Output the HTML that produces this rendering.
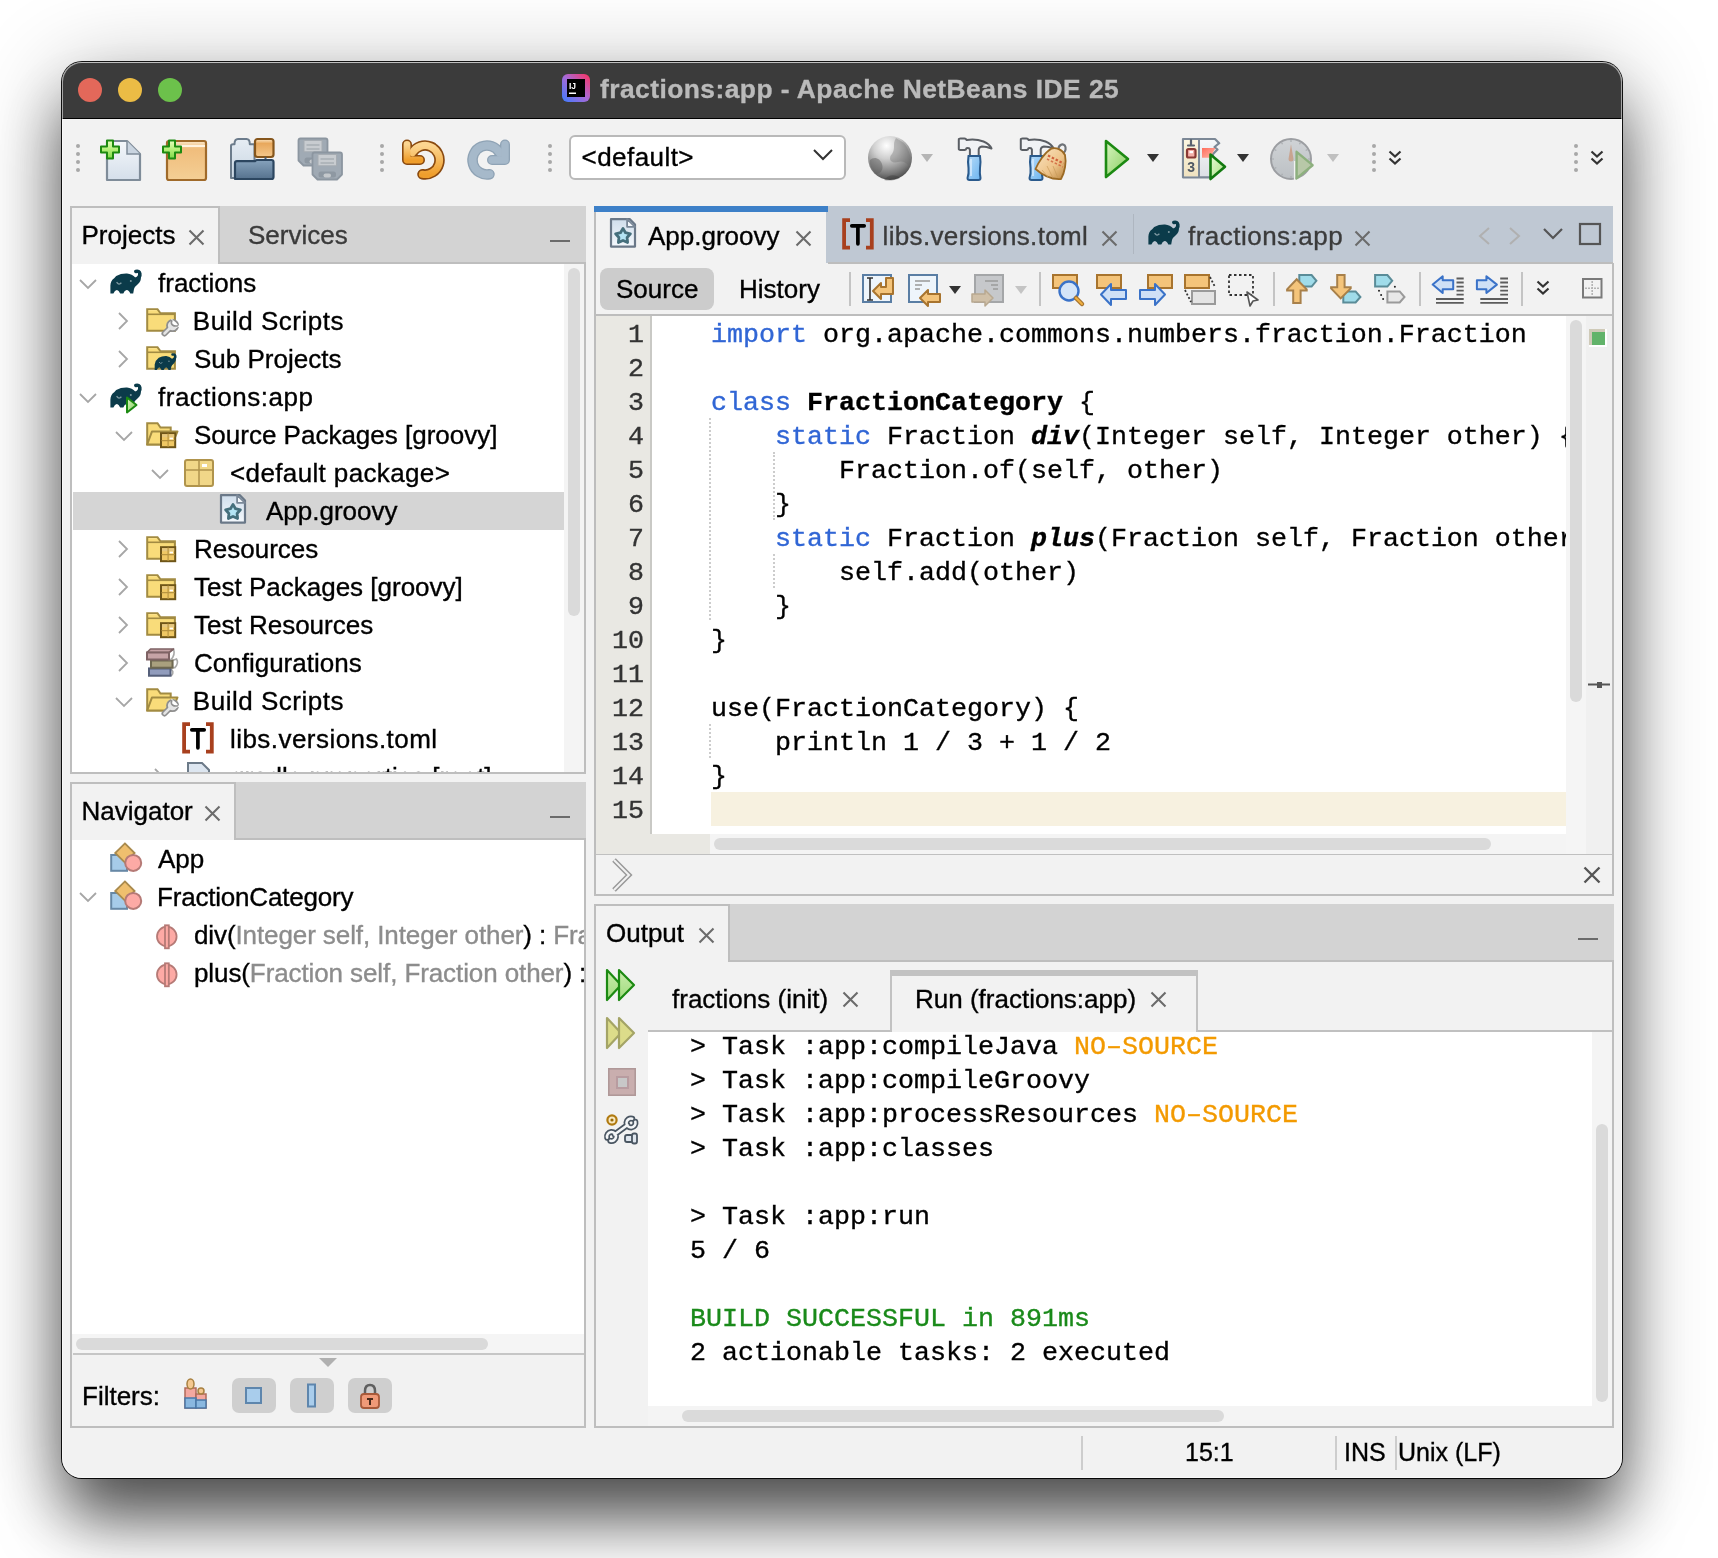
<!DOCTYPE html>
<html><head><meta charset="utf-8"><title>NetBeans</title>
<style>
html,body{margin:0;padding:0}
body{width:1718px;height:1558px;position:relative;overflow:hidden;background:#fff;font-family:'Liberation Sans', sans-serif}
.a{position:absolute}
svg{overflow:visible}
.t{white-space:nowrap;-webkit-text-stroke:0.35px currentColor}
</style></head><body>
<div class="a" style="left:0;top:0;width:1718px;height:1558px;will-change:transform">
<div class="a" style="left:62px;top:62px;width:1560px;height:1416px;border-radius:20px;background:#f2f2f2;box-shadow:0 0 0 1px rgba(0,0,0,0.92),0 44px 64px -4px rgba(0,0,0,0.62),0 12px 90px 0 rgba(0,0,0,0.30);overflow:hidden"><div class="a" style="left:0;top:0;width:100%;height:56px;background:#3b3b3b;border-bottom:1px solid #000"></div><div class="a" style="left:0;top:0;width:100%;height:1px;background:#707070;border-radius:20px 20px 0 0"></div></div>
<div class="a" style="left:78px;top:78px;width:24px;height:24px;border-radius:50%;background:#e3685a"></div>
<div class="a" style="left:118px;top:78px;width:24px;height:24px;border-radius:50%;background:#ebbc45"></div>
<div class="a" style="left:158px;top:78px;width:24px;height:24px;border-radius:50%;background:#6cc14b"></div>
<svg class="a" style="left:562px;top:74px" width="28" height="28" viewBox="0 0 28 28"><defs><linearGradient id="ijg" x1="1" y1="0" x2="0" y2="1"><stop offset="0" stop-color="#fe315d"/><stop offset="0.5" stop-color="#a56ad8"/><stop offset="1" stop-color="#3c7cff"/></linearGradient></defs><rect x="0" y="0" width="28" height="28" rx="6" fill="url(#ijg)"/><rect x="5" y="5" width="18" height="18" fill="#000"/><text x="7" y="14.5" font-family="Liberation Sans" font-weight="bold" font-size="8.5" fill="#fff">IJ</text><rect x="7" y="18.5" width="7" height="1.5" fill="#fff"/></svg>
<div class="a t" style="left:600px;top:72.45px;line-height:34px;font-size:26.4px;color:#bababa;font-weight:bold;font-family:'Liberation Sans', sans-serif;letter-spacing:0.45px;">fractions:app - Apache NetBeans IDE 25</div>
<div class="a" style="left:76px;top:144px;width:4px;height:4px;border-radius:50%;background:#a8a8a8"></div>
<div class="a" style="left:76px;top:152px;width:4px;height:4px;border-radius:50%;background:#a8a8a8"></div>
<div class="a" style="left:76px;top:160px;width:4px;height:4px;border-radius:50%;background:#a8a8a8"></div>
<div class="a" style="left:76px;top:168px;width:4px;height:4px;border-radius:50%;background:#a8a8a8"></div>
<div class="a" style="left:380px;top:144px;width:4px;height:4px;border-radius:50%;background:#a8a8a8"></div>
<div class="a" style="left:380px;top:152px;width:4px;height:4px;border-radius:50%;background:#a8a8a8"></div>
<div class="a" style="left:380px;top:160px;width:4px;height:4px;border-radius:50%;background:#a8a8a8"></div>
<div class="a" style="left:380px;top:168px;width:4px;height:4px;border-radius:50%;background:#a8a8a8"></div>
<div class="a" style="left:548px;top:144px;width:4px;height:4px;border-radius:50%;background:#a8a8a8"></div>
<div class="a" style="left:548px;top:152px;width:4px;height:4px;border-radius:50%;background:#a8a8a8"></div>
<div class="a" style="left:548px;top:160px;width:4px;height:4px;border-radius:50%;background:#a8a8a8"></div>
<div class="a" style="left:548px;top:168px;width:4px;height:4px;border-radius:50%;background:#a8a8a8"></div>
<div class="a" style="left:1372px;top:144px;width:4px;height:4px;border-radius:50%;background:#a8a8a8"></div>
<div class="a" style="left:1372px;top:152px;width:4px;height:4px;border-radius:50%;background:#a8a8a8"></div>
<div class="a" style="left:1372px;top:160px;width:4px;height:4px;border-radius:50%;background:#a8a8a8"></div>
<div class="a" style="left:1372px;top:168px;width:4px;height:4px;border-radius:50%;background:#a8a8a8"></div>
<div class="a" style="left:1574px;top:144px;width:4px;height:4px;border-radius:50%;background:#a8a8a8"></div>
<div class="a" style="left:1574px;top:152px;width:4px;height:4px;border-radius:50%;background:#a8a8a8"></div>
<div class="a" style="left:1574px;top:160px;width:4px;height:4px;border-radius:50%;background:#a8a8a8"></div>
<div class="a" style="left:1574px;top:168px;width:4px;height:4px;border-radius:50%;background:#a8a8a8"></div>
<svg class="a" style="left:100px;top:138px" width="44" height="44" viewBox="0 0 44 44"><defs><linearGradient id="nfg" x1="0" y1="0" x2="0" y2="1"><stop offset="0" stop-color="#f4f7fb"/><stop offset="1" stop-color="#d5dfea"/></linearGradient></defs><defs><linearGradient id="plg" x1="0" y1="0" x2="0" y2="1"><stop offset="0" stop-color="#e6ffc0"/><stop offset="0.5" stop-color="#b4f078"/><stop offset="1" stop-color="#7ed848"/></linearGradient></defs><path d="M7 3 H27 L40 16 V42 H7 Z" fill="url(#nfg)" stroke="#7f8c99" stroke-width="2.2" stroke-linejoin="round"/><path d="M27 3 V16 H40" fill="#c9d4e0" stroke="#7f8c99" stroke-width="1.5"/><path d="M7 2.5 H13 V8.5 H19 V14.5 H13 V20.5 H7 V14.5 H1 V8.5 H7 Z" fill="url(#plg)" stroke="#1d8a10" stroke-width="2" stroke-linejoin="round"/></svg>
<svg class="a" style="left:162px;top:138px" width="46" height="44" viewBox="0 0 46 44"><defs><linearGradient id="npg" x1="0" y1="0" x2="0" y2="1"><stop offset="0" stop-color="#fbe7c9"/><stop offset="0.2" stop-color="#f0bd7c"/><stop offset="1" stop-color="#f4cf95"/></linearGradient></defs><defs><linearGradient id="plg" x1="0" y1="0" x2="0" y2="1"><stop offset="0" stop-color="#e6ffc0"/><stop offset="0.5" stop-color="#b4f078"/><stop offset="1" stop-color="#7ed848"/></linearGradient></defs><rect x="5" y="3" width="39" height="39" rx="2" fill="url(#npg)" stroke="#a06a2a" stroke-width="2.2"/><path d="M6 8 H43" stroke="#fff3e0" stroke-width="2"/><path d="M7 2.5 H13 V8.5 H19 V14.5 H13 V20.5 H7 V14.5 H1 V8.5 H7 Z" fill="url(#plg)" stroke="#1d8a10" stroke-width="2" stroke-linejoin="round"/></svg>
<svg class="a" style="left:228px;top:136px" width="48" height="46" viewBox="0 0 48 46"><defs><linearGradient id="opg" x1="0" y1="0" x2="0" y2="1"><stop offset="0" stop-color="#e6edf4"/><stop offset="1" stop-color="#c9d6e2"/></linearGradient></defs><defs><linearGradient id="opf" x1="0" y1="0" x2="0" y2="1"><stop offset="0" stop-color="#86a2bc"/><stop offset="1" stop-color="#56728e"/></linearGradient></defs><defs><linearGradient id="opb" x1="0" y1="0" x2="0" y2="1"><stop offset="0" stop-color="#fbe6c4"/><stop offset="0.25" stop-color="#e8a85c"/><stop offset="1" stop-color="#f4c88c"/></linearGradient></defs><path d="M3 42 V10 Q3 8.2, 5 8.2 H6.5 Q6.5 3, 10 3 H18.5 Q21.8 3, 21.8 8.2 H26.5 V42 Z" fill="url(#opg)" stroke="#6c7c8c" stroke-width="2" stroke-linejoin="round"/><rect x="27" y="3" width="18.5" height="18" rx="2.5" fill="url(#opb)" stroke="#86561c" stroke-width="2.2"/><path d="M37.5 21 V25" stroke="#4a5a6a" stroke-width="2"/><path d="M7 43 V27 Q7 25.2, 9 25.2 H27 L28.5 24 H43.5 Q45.5 24, 45.5 26 V41 Q45.5 43, 43.5 43 Z" fill="url(#opf)" stroke="#2c4660" stroke-width="2.2" stroke-linejoin="round"/></svg>
<svg class="a" style="left:296px;top:136px" width="48" height="46" viewBox="0 0 48 46"><path d="M4.5 2.5 H29.5 Q31.5 2.5, 31.5 4.5 V24.5 L26.5 29.5 H7.5 L2.5 24.5 V4.5 Q2.5 2.5, 4.5 2.5 Z" fill="#a0aab4" stroke="#8c96a0" stroke-width="1.8" stroke-linejoin="round"/><rect x="8.0" y="4.5" width="18" height="11.3" fill="#c8ccd0" stroke="#a6acb2" stroke-width="1"/><path d="M10.5 9.0 H23.5 M10.5 13.0 H23.5" stroke="#a8aeb4" stroke-width="1.4"/><rect x="8.5" y="21.5" width="17" height="6" rx="2.5" fill="#8e98a2"/><rect x="13.5" y="23.5" width="7" height="4" rx="2" fill="#c4c8cc"/><path d="M18.5 16.5 H44.0 Q46.0 16.5, 46.0 18.5 V38.5 L41.0 43.5 H21.5 L16.5 38.5 V18.5 Q16.5 16.5, 18.5 16.5 Z" fill="#a0aab4" stroke="#8c96a0" stroke-width="1.8" stroke-linejoin="round"/><rect x="22.0" y="18.5" width="18.5" height="11.3" fill="#c8ccd0" stroke="#a6acb2" stroke-width="1"/><path d="M24.5 23.0 H38.0 M24.5 27.0 H38.0" stroke="#a8aeb4" stroke-width="1.4"/><rect x="22.5" y="35.5" width="17.5" height="6" rx="2.5" fill="#8e98a2"/><rect x="27.5" y="37.5" width="7.5" height="4" rx="2" fill="#c4c8cc"/></svg>
<svg class="a" style="left:399px;top:138px" width="48" height="44" viewBox="0 0 48 44"><defs><linearGradient id="ung" x1="0" y1="0" x2="0" y2="1"><stop offset="0" stop-color="#fcd590"/><stop offset="1" stop-color="#ef9e2c"/></linearGradient></defs><path d="M13.44 14.75 A14.5 14.5 0 1 1 23.48 36.28" fill="none" stroke="#8a4a10" stroke-width="10.5" stroke-linecap="round"/><path d="M8 6.5 V22 H21" fill="none" stroke="#8a4a10" stroke-width="10" stroke-linecap="round" stroke-linejoin="round"/><path d="M13.44 14.75 A14.5 14.5 0 1 1 23.48 36.28" fill="none" stroke="url(#ung)" stroke-width="7.2" stroke-linecap="round"/><path d="M8 6.5 V22 H21" fill="none" stroke="url(#ung)" stroke-width="6.8" stroke-linecap="round" stroke-linejoin="round"/></svg>
<svg class="a" style="left:465px;top:138px" width="48" height="44" viewBox="0 0 48 44"><g transform="translate(48,0) scale(-1,1)"><path d="M13.44 14.75 A14.5 14.5 0 1 1 23.48 36.28" fill="none" stroke="#8fa3b5" stroke-width="10.5" stroke-linecap="round"/><path d="M8 6.5 V22 H21" fill="none" stroke="#8fa3b5" stroke-width="10" stroke-linecap="round" stroke-linejoin="round"/><path d="M13.44 14.75 A14.5 14.5 0 1 1 23.48 36.28" fill="none" stroke="#a6b9ca" stroke-width="7.8" stroke-linecap="round"/><path d="M8 6.5 V22 H21" fill="none" stroke="#a6b9ca" stroke-width="7.4" stroke-linecap="round" stroke-linejoin="round"/></g></svg>
<div class="a" style="left:569px;top:135px;width:273px;height:41px;border:2px solid #b9b9b9;border-radius:6px;background:#fff"></div>
<div class="a t" style="left:581.5px;top:139.99px;line-height:34px;font-size:26px;color:#000;font-weight:normal;font-family:'Liberation Sans', sans-serif;letter-spacing:0.45px;">&lt;default&gt;</div>
<svg class="a" style="left:812px;top:148px" width="22" height="14" viewBox="0 0 22 14"><path d="M2 2 L11 11 L20 2" fill="none" stroke="#333" stroke-width="2"/></svg>
<svg class="a" style="left:866px;top:134px" width="48" height="48" viewBox="0 0 48 48"><defs><radialGradient id="glg" cx="0.42" cy="0.22" r="0.85"><stop offset="0" stop-color="#ffffff"/><stop offset="0.35" stop-color="#cfcfcf"/><stop offset="0.75" stop-color="#7a7a7a"/><stop offset="1" stop-color="#3a3a3a"/></radialGradient></defs><circle cx="24" cy="24" r="22" fill="url(#glg)"/><path d="M4 26 C8 22, 14 24, 16 30 C18 36, 14 40, 10 40 C6 36, 3 31, 4 26 Z" fill="#5a5a5a" opacity="0.45"/><path d="M30 4 C26 10, 30 14, 26 20 C22 24, 24 30, 32 28 C38 26, 42 30, 44 34 C46 26, 44 16, 38 9 Z" fill="#6a6a6a" opacity="0.35"/><path d="M18 46 C22 40, 30 40, 34 44 C28 47, 22 47, 18 46 Z" fill="#333" opacity="0.35"/></svg>
<svg class="a" style="left:921px;top:154px" width="12" height="8" viewBox="0 0 12 8"><path d="M0 0 L12 0 L6 8 Z" fill="#b5b5b5"/></svg>
<svg class="a" style="left:954px;top:136px" width="42" height="46" viewBox="0 0 42 46"><defs><linearGradient id="hmb" x1="0" y1="0" x2="1" y2="1"><stop offset="0" stop-color="#b8dcf8"/><stop offset="1" stop-color="#6cb4f0"/></linearGradient></defs><g transform="translate(1.5,0)"><path d="M3.3 3.5 Q3 2.5, 5 2.5 H9 Q10.5 2.5, 11 4 Q20 2.5, 28 5.5 Q34 8, 36 12.5 Q31 10.5, 26.5 10.5 Q23.5 11, 23.2 13.5 V20 H14.4 V13.5 Q14 11.6, 11 12.2 Q10.5 14, 9 14 H5 Q3 14, 3.3 12.5 Z" fill="#f0f2f5" stroke="#5a5e64" stroke-width="2" stroke-linejoin="round"/><path d="M13 20 H24.5 Q25.5 26, 24.5 32 Q24 38, 25 42 Q25 44, 23 44 H14 Q12 44, 12 42 Q13.5 38, 13 32 Q12 26, 13 20 Z" fill="url(#hmb)" stroke="#2a5a8c" stroke-width="2"/><path d="M15.5 23 V40" stroke="#e4f2ff" stroke-width="1.6" opacity="0.8"/></g></svg>
<svg class="a" style="left:1018px;top:136px" width="50" height="46" viewBox="0 0 50 46"><defs><linearGradient id="hmb" x1="0" y1="0" x2="1" y2="1"><stop offset="0" stop-color="#b8dcf8"/><stop offset="1" stop-color="#6cb4f0"/></linearGradient></defs><g transform="translate(-0.5,0)"><path d="M3.3 3.5 Q3 2.5, 5 2.5 H9 Q10.5 2.5, 11 4 Q20 2.5, 28 5.5 Q34 8, 36 12.5 Q31 10.5, 26.5 10.5 Q23.5 11, 23.2 13.5 V20 H14.4 V13.5 Q14 11.6, 11 12.2 Q10.5 14, 9 14 H5 Q3 14, 3.3 12.5 Z" fill="#f0f2f5" stroke="#5a5e64" stroke-width="2" stroke-linejoin="round"/><path d="M13 20 H24.5 Q25.5 26, 24.5 32 Q24 38, 25 42 Q25 44, 23 44 H14 Q12 44, 12 42 Q13.5 38, 13 32 Q12 26, 13 20 Z" fill="url(#hmb)" stroke="#2a5a8c" stroke-width="2"/><path d="M15.5 23 V40" stroke="#e4f2ff" stroke-width="1.6" opacity="0.8"/></g><defs><linearGradient id="brg" x1="0" y1="0" x2="1" y2="1"><stop offset="0" stop-color="#fbe6c4"/><stop offset="0.6" stop-color="#eec48a"/><stop offset="1" stop-color="#b8843e"/></linearGradient></defs><path d="M40.5 14 C40 9, 44.5 7, 46.8 9.5 C48.5 12, 47.5 15.5, 45.5 17" fill="none" stroke="#6e7278" stroke-width="2.2"/><path d="M17.5 33 C20 27, 26 17, 33.5 12.5 C38 11.5, 44 13, 47 19 C48.5 26, 47 36, 43 43 C36 43.5, 26 40.5, 17.5 33 Z" fill="url(#brg)" stroke="#9c6a24" stroke-width="1.8" stroke-linejoin="round"/><path d="M30 19.5 L45.5 27.5" stroke="#d0603a" stroke-width="2.2" stroke-dasharray="2.5 1.8"/><path d="M29 23 L45 31" stroke="#d0603a" stroke-width="1.6" stroke-dasharray="2.5 1.8" opacity="0.8"/><path d="M24 34 L30 41 M29 30 L35 42 M35 30 L40 42" stroke="#c89a5a" stroke-width="1" opacity="0.7"/></svg>
<svg class="a" style="left:1102px;top:138px" width="30" height="42" viewBox="0 0 30 42"><defs><linearGradient id="rng" x1="0" y1="0" x2="1" y2="1"><stop offset="0" stop-color="#d8f4c0"/><stop offset="1" stop-color="#86cf5e"/></linearGradient></defs><path d="M4 3 L26 21 L4 39 Z" fill="url(#rng)" stroke="#1c8a12" stroke-width="2.6" stroke-linejoin="round"/></svg>
<svg class="a" style="left:1147px;top:154px" width="12" height="8" viewBox="0 0 12 8"><path d="M0 0 L12 0 L6 8 Z" fill="#333"/></svg>
<svg class="a" style="left:1180px;top:136px" width="48" height="46" viewBox="0 0 48 46"><defs><linearGradient id="dbg" x1="0" y1="0" x2="0" y2="1"><stop offset="0" stop-color="#fbf6e0"/><stop offset="1" stop-color="#efe2c0"/></linearGradient></defs><defs><linearGradient id="dbp" x1="0" y1="0" x2="0" y2="1"><stop offset="0" stop-color="#f6f8fa"/><stop offset="1" stop-color="#dcdfe4"/></linearGradient></defs><defs><linearGradient id="dbr" x1="0" y1="0" x2="1" y2="1"><stop offset="0" stop-color="#ff6e5e"/><stop offset="1" stop-color="#ffb8a8"/></linearGradient></defs><defs><linearGradient id="rng2" x1="0" y1="0" x2="1" y2="1"><stop offset="0" stop-color="#e8fad8"/><stop offset="1" stop-color="#a6e07e"/></linearGradient></defs><path d="M3 3 H35 L39.2 7.2 L34.5 11 L37.5 13.5 L33 18 V36 L30 41.3 H3 Z" fill="url(#dbp)" stroke="#7c8896" stroke-width="2.2" stroke-linejoin="round"/><rect x="4" y="4" width="15" height="36.3" fill="url(#dbg)"/><path d="M19 3.5 V41" stroke="#7c8896" stroke-width="2"/><path d="M11 4 V9 M8 9.5 H14" stroke="#5a6470" stroke-width="2.2" stroke-linecap="round"/><rect x="7" y="13" width="8.5" height="8.5" rx="1.5" fill="#f4b0a8" stroke="#8a3a34" stroke-width="2.2"/><rect x="9.5" y="15" width="3.5" height="2.2" fill="#fff"/><text x="7.2" y="36" font-family="Liberation Sans" font-weight="bold" font-size="14" fill="#4e5864">3</text><path d="M22 12 H35.5 L30 21.7 H22 Z" fill="url(#dbr)"/><path d="M30.5 18.5 L45 30.7 L30.5 43 Z" fill="url(#rng2)" stroke="#137a10" stroke-width="2.6" stroke-linejoin="round"/></svg>
<svg class="a" style="left:1237px;top:154px" width="12" height="8" viewBox="0 0 12 8"><path d="M0 0 L12 0 L6 8 Z" fill="#333"/></svg>
<svg class="a" style="left:1268px;top:136px" width="48" height="46" viewBox="0 0 48 46"><defs><linearGradient id="prg" x1="0" y1="0" x2="0" y2="1"><stop offset="0" stop-color="#d0d3d6"/><stop offset="1" stop-color="#bcc0c4"/></linearGradient></defs><circle cx="23" cy="23" r="20" fill="url(#prg)" stroke="#9c9ea2" stroke-width="2"/><path d="M23.0 6.0 L23.0 4.0 M31.5 8.3 L32.5 6.5 M37.7 14.5 L39.5 13.5 M40.0 23.0 L42.0 23.0 M37.7 31.5 L39.5 32.5 M31.5 37.7 L32.5 39.5 M23.0 40.0 L23.0 42.0 M14.5 37.7 L13.5 39.5 M8.3 31.5 L6.5 32.5 M6.0 23.0 L4.0 23.0 M8.3 14.5 L6.5 13.5 M14.5 8.3 L13.5 6.5 " stroke="#a8acb0" stroke-width="1.2"/><path d="M23 8.3 L25.5 23 Q25.5 25.5, 23 25.5 Q20.5 25.5, 20.5 23 Z" fill="#c8a490"/><path d="M26.7 25 V44" stroke="#f2f2f2" stroke-width="1.6"/><path d="M28.6 15.8 L44.6 29.2 L28.6 42.4 Z" fill="#b8c8a8" stroke="#8db07e" stroke-width="2.4" stroke-linejoin="round"/></svg>
<svg class="a" style="left:1327px;top:154px" width="12" height="8" viewBox="0 0 12 8"><path d="M0 0 L12 0 L6 8 Z" fill="#c0c0c0"/></svg>
<svg class="a" style="left:1388px;top:150px" width="14" height="16" viewBox="0 0 14 16"><path d="M1.5 1.5 L7 6.5 L12.5 1.5 M1.5 8.5 L7 13.5 L12.5 8.5" fill="none" stroke="#333" stroke-width="2.2"/></svg>
<svg class="a" style="left:1590px;top:150px" width="14" height="16" viewBox="0 0 14 16"><path d="M1.5 1.5 L7 6.5 L12.5 1.5 M1.5 8.5 L7 13.5 L12.5 8.5" fill="none" stroke="#333" stroke-width="2.2"/></svg>
<div class="a" style="left:70px;top:206px;width:516px;height:568px;background:#fff;border:2px solid #bebebe;box-sizing:border-box"></div>
<div class="a" style="left:72px;top:208px;width:146px;height:56px;background:#f2f2f2"></div>
<div class="a" style="left:218px;top:206px;width:368px;height:58px;background:#d3d3d3;border-left:2px solid #bebebe;border-bottom:2px solid #bebebe;box-sizing:border-box"></div>
<div class="a t" style="left:81.5px;top:217.99px;line-height:34px;font-size:26px;color:#000;font-weight:normal;font-family:'Liberation Sans', sans-serif;">Projects</div>
<svg class="a" style="left:188px;top:229px" width="17" height="17" viewBox="0 0 17 17"><path d="M1.5 1.5 L15.5 15.5 M15.5 1.5 L1.5 15.5" stroke="#6b6b6b" stroke-width="2.1" fill="none"/></svg>
<div class="a t" style="left:248px;top:217.99px;line-height:34px;font-size:26px;color:#3a3a3a;font-weight:normal;font-family:'Liberation Sans', sans-serif;">Services</div>
<div class="a" style="left:550px;top:240px;width:20px;height:2px;background:#6b6b6b"></div>
<div class="a" style="left:564px;top:264px;width:20px;height:508px;background:#f4f4f4"></div>
<div class="a" style="left:568px;top:268px;width:12px;height:348px;background:#dadada;border-radius:6px"></div>
<div class="a" style="left:73px;top:492px;width:491px;height:38px;background:#d5d5d5"></div>
<div class="a" style="left:73px;top:264px;width:491px;height:508px;overflow:hidden">
<svg class="a" style="left:6px;top:15px" width="18" height="11" viewBox="0 0 18 11"><path d="M1 1 L9 9 L17 1" fill="none" stroke="#a6a6a6" stroke-width="1.8"/></svg>
<svg class="a" style="left:35px;top:3px" width="36" height="32" viewBox="0 0 36 32"><path d="M2.4 26.6 V18.5 Q2.6 13.5, 6.2 11.2 L8.2 9 Q13 6.4, 19 6.6 Q24 7, 27.5 10.8 L32.8 10 Q33.5 14, 29.5 17.5 Q26.8 19.5, 26 22 L25.2 26.6 H22.3 Q20.8 22.8, 18.6 23 Q16.5 23.2, 15.3 26.6 H12.2 Q10.6 22.8, 8.8 23 Q6.8 23.2, 5.4 26.6 Z" fill="#0b3b4a"/><path d="M27.5 12.5 Q32.5 10.5, 31.8 6.5 Q31.2 3.6, 27.8 4.4" fill="none" stroke="#0b3b4a" stroke-width="3.6" stroke-linecap="round"/><path d="M8.6 15.2 Q10.8 18.6, 13.4 15.8" fill="none" stroke="#7f9aa2" stroke-width="1.3"/><circle cx="22.8" cy="14" r="1" fill="#7f9aa2"/></svg>
<div class="a t" style="left:85px;top:1.99px;line-height:34px;font-size:26px;color:#000;font-weight:normal;font-family:'Liberation Sans', sans-serif;">fractions</div>
<svg class="a" style="left:45px;top:48px" width="11" height="18" viewBox="0 0 11 18"><path d="M1 1 L9 9 L1 17" fill="none" stroke="#a6a6a6" stroke-width="1.8"/></svg>
<svg class="a" style="left:71px;top:41px" width="36" height="32" viewBox="0 0 36 32"><path d="M3.2 4.2 H13.5 L16.5 8.3 H30.9 V25.8 H3.2 Z" fill="#f9dc7a" stroke="#a28b42" stroke-width="2" stroke-linejoin="miter"/><path d="M3.2 9.3 H30.9" stroke="#a28b42" stroke-width="1.6"/><path d="M4.5 5.6 H12.8" stroke="#fde48e" stroke-width="1"/><path d="M20.5 28.5 L26 23" stroke="#8f8f8f" stroke-width="6" stroke-linecap="round"/><circle cx="28.6" cy="20.6" r="5.6" fill="#e4e4e4" stroke="#8f8f8f" stroke-width="1.8"/><path d="M20.5 28.5 L26 23" stroke="#e4e4e4" stroke-width="2.6" stroke-linecap="round"/><path d="M27.5 13.5 L35.5 21.5 L32.5 22.8 L27.2 18 Z" fill="#fff"/><path d="M28 15.2 Q26.5 18.5, 28.5 20 Q30.5 21.5, 34 20.8" fill="none" stroke="#8f8f8f" stroke-width="1.6"/></svg>
<div class="a t" style="left:119.8px;top:39.99px;line-height:34px;font-size:26px;color:#000;font-weight:normal;font-family:'Liberation Sans', sans-serif;letter-spacing:0.52px;">Build Scripts</div>
<svg class="a" style="left:45px;top:86px" width="11" height="18" viewBox="0 0 11 18"><path d="M1 1 L9 9 L1 17" fill="none" stroke="#a6a6a6" stroke-width="1.8"/></svg>
<svg class="a" style="left:71px;top:79px" width="36" height="32" viewBox="0 0 36 32"><path d="M3.2 4.2 H13.5 L16.5 8.3 H30.9 V25.8 H3.2 Z" fill="#f9dc7a" stroke="#a28b42" stroke-width="2" stroke-linejoin="miter"/><path d="M3.2 9.3 H30.9" stroke="#a28b42" stroke-width="1.6"/><path d="M4.5 5.6 H12.8" stroke="#fde48e" stroke-width="1"/><g transform="translate(9,8.5) scale(0.7)"><path d="M2.4 26.6 V18.5 Q2.6 13.5, 6.2 11.2 L8.2 9 Q13 6.4, 19 6.6 Q24 7, 27.5 10.8 L32.8 10 Q33.5 14, 29.5 17.5 Q26.8 19.5, 26 22 L25.2 26.6 H22.3 Q20.8 22.8, 18.6 23 Q16.5 23.2, 15.3 26.6 H12.2 Q10.6 22.8, 8.8 23 Q6.8 23.2, 5.4 26.6 Z" fill="#0b3b4a"/><path d="M27.5 12.5 Q32.5 10.5, 31.8 6.5 Q31.2 3.6, 27.8 4.4" fill="none" stroke="#0b3b4a" stroke-width="3.6" stroke-linecap="round"/><path d="M8.6 15.2 Q10.8 18.6, 13.4 15.8" fill="none" stroke="#7f9aa2" stroke-width="1.3"/><circle cx="22.8" cy="14" r="1" fill="#7f9aa2"/></g></svg>
<div class="a t" style="left:121px;top:77.99px;line-height:34px;font-size:26px;color:#000;font-weight:normal;font-family:'Liberation Sans', sans-serif;">Sub Projects</div>
<svg class="a" style="left:6px;top:129px" width="18" height="11" viewBox="0 0 18 11"><path d="M1 1 L9 9 L17 1" fill="none" stroke="#a6a6a6" stroke-width="1.8"/></svg>
<svg class="a" style="left:35px;top:117px" width="36" height="32" viewBox="0 0 36 32"><path d="M2.4 26.6 V18.5 Q2.6 13.5, 6.2 11.2 L8.2 9 Q13 6.4, 19 6.6 Q24 7, 27.5 10.8 L32.8 10 Q33.5 14, 29.5 17.5 Q26.8 19.5, 26 22 L25.2 26.6 H22.3 Q20.8 22.8, 18.6 23 Q16.5 23.2, 15.3 26.6 H12.2 Q10.6 22.8, 8.8 23 Q6.8 23.2, 5.4 26.6 Z" fill="#0b3b4a"/><path d="M27.5 12.5 Q32.5 10.5, 31.8 6.5 Q31.2 3.6, 27.8 4.4" fill="none" stroke="#0b3b4a" stroke-width="3.6" stroke-linecap="round"/><path d="M8.6 15.2 Q10.8 18.6, 13.4 15.8" fill="none" stroke="#7f9aa2" stroke-width="1.3"/><circle cx="22.8" cy="14" r="1" fill="#7f9aa2"/><defs><linearGradient id="grg" x1="0" y1="0" x2="1" y2="1"><stop offset="0" stop-color="#d8f4c0"/><stop offset="1" stop-color="#86cf5e"/></linearGradient></defs><path d="M19 16.5 L28.5 24 L19 31.5 Z" fill="url(#grg)" stroke="#1c8a12" stroke-width="2" stroke-linejoin="round"/></svg>
<div class="a t" style="left:85px;top:115.99px;line-height:34px;font-size:26px;color:#000;font-weight:normal;font-family:'Liberation Sans', sans-serif;letter-spacing:0.5px;">fractions:app</div>
<svg class="a" style="left:42px;top:167px" width="18" height="11" viewBox="0 0 18 11"><path d="M1 1 L9 9 L17 1" fill="none" stroke="#a6a6a6" stroke-width="1.8"/></svg>
<svg class="a" style="left:71px;top:155px" width="36" height="32" viewBox="0 0 36 32"><path d="M3.2 4.3 H13.5 L16.5 8.6 H26.7 V25.5 H3.2 Z" fill="#f9dc7a" stroke="#a28b42" stroke-width="2"/><path d="M8 12.4 H33.5 L28 25.5 H3.2 Z" fill="#f9dc7a" stroke="#a28b42" stroke-width="2" stroke-linejoin="round"/><rect x="17" y="14.2" width="14.2" height="14" fill="#f0c864" stroke="#6e5518" stroke-width="2"/><rect x="18" y="15.2" width="12.2" height="3" fill="#e6c880"/><path d="M24.1 14.5 V28 M17.5 21.6 H30.7" stroke="#b89440" stroke-width="1.2"/><rect x="25.6" y="18.6" width="3.4" height="1.8" fill="#fff"/></svg>
<div class="a t" style="left:121px;top:153.99px;line-height:34px;font-size:26px;color:#000;font-weight:normal;font-family:'Liberation Sans', sans-serif;">Source Packages [groovy]</div>
<svg class="a" style="left:78px;top:205px" width="18" height="11" viewBox="0 0 18 11"><path d="M1 1 L9 9 L17 1" fill="none" stroke="#a6a6a6" stroke-width="1.8"/></svg>
<svg class="a" style="left:107px;top:193px" width="36" height="32" viewBox="0 0 36 32"><rect x="5" y="3" width="28" height="26" rx="2" fill="#f1d788" stroke="#b0944c" stroke-width="2"/><path d="M5 13 H33 M19 3 V29" stroke="#b0944c" stroke-width="1.5"/><rect x="22" y="7" width="5" height="3" fill="#fff"/></svg>
<div class="a t" style="left:157px;top:191.99px;line-height:34px;font-size:26px;color:#000;font-weight:normal;font-family:'Liberation Sans', sans-serif;letter-spacing:0.37px;">&lt;default package&gt;</div>
<svg class="a" style="left:143px;top:229px" width="36" height="32" viewBox="0 0 36 32"><defs><linearGradient id="gvg" x1="0" y1="0" x2="0" y2="1"><stop offset="0" stop-color="#d0deec"/><stop offset="1" stop-color="#f4f8fc"/></linearGradient></defs><path d="M5 2.1 H23.7 L29 7.5 V29.6 H5 Z" fill="url(#gvg)" stroke="#6a7888" stroke-width="2.2" stroke-linejoin="round"/><path d="M21.1 2.1 V9.8 H29 Z" fill="#f4f8fc" stroke="#7a8898" stroke-width="1.8" stroke-linejoin="round"/><path d="M17.0 11.4 L19.5 15.7 L24.4 16.8 L21.1 20.5 L21.6 25.5 L17.0 23.5 L12.4 25.5 L12.9 20.5 L9.6 16.8 L14.5 15.7 Z" fill="#b4e4f4" stroke="#456f7c" stroke-width="2.8" stroke-linejoin="round"/></svg>
<div class="a t" style="left:193px;top:229.99px;line-height:34px;font-size:26px;color:#000;font-weight:normal;font-family:'Liberation Sans', sans-serif;">App.groovy</div>
<svg class="a" style="left:45px;top:276px" width="11" height="18" viewBox="0 0 11 18"><path d="M1 1 L9 9 L1 17" fill="none" stroke="#a6a6a6" stroke-width="1.8"/></svg>
<svg class="a" style="left:71px;top:269px" width="36" height="32" viewBox="0 0 36 32"><path d="M3.2 4.2 H13.5 L16.5 8.3 H30.9 V25.8 H3.2 Z" fill="#f9dc7a" stroke="#a28b42" stroke-width="2" stroke-linejoin="miter"/><path d="M3.2 9.3 H30.9" stroke="#a28b42" stroke-width="1.6"/><path d="M4.5 5.6 H12.8" stroke="#fde48e" stroke-width="1"/><rect x="17" y="14.2" width="14.2" height="14" fill="#f0c864" stroke="#6e5518" stroke-width="2"/><rect x="18" y="15.2" width="12.2" height="3" fill="#e6c880"/><path d="M24.1 14.5 V28 M17.5 21.6 H30.7" stroke="#b89440" stroke-width="1.2"/><rect x="25.6" y="18.6" width="3.4" height="1.8" fill="#fff"/></svg>
<div class="a t" style="left:121px;top:267.99px;line-height:34px;font-size:26px;color:#000;font-weight:normal;font-family:'Liberation Sans', sans-serif;">Resources</div>
<svg class="a" style="left:45px;top:314px" width="11" height="18" viewBox="0 0 11 18"><path d="M1 1 L9 9 L1 17" fill="none" stroke="#a6a6a6" stroke-width="1.8"/></svg>
<svg class="a" style="left:71px;top:307px" width="36" height="32" viewBox="0 0 36 32"><path d="M3.2 4.2 H13.5 L16.5 8.3 H30.9 V25.8 H3.2 Z" fill="#f9dc7a" stroke="#a28b42" stroke-width="2" stroke-linejoin="miter"/><path d="M3.2 9.3 H30.9" stroke="#a28b42" stroke-width="1.6"/><path d="M4.5 5.6 H12.8" stroke="#fde48e" stroke-width="1"/><rect x="17" y="14.2" width="14.2" height="14" fill="#f0c864" stroke="#6e5518" stroke-width="2"/><rect x="18" y="15.2" width="12.2" height="3" fill="#e6c880"/><path d="M24.1 14.5 V28 M17.5 21.6 H30.7" stroke="#b89440" stroke-width="1.2"/><rect x="25.6" y="18.6" width="3.4" height="1.8" fill="#fff"/></svg>
<div class="a t" style="left:121px;top:305.99px;line-height:34px;font-size:26px;color:#000;font-weight:normal;font-family:'Liberation Sans', sans-serif;">Test Packages [groovy]</div>
<svg class="a" style="left:45px;top:352px" width="11" height="18" viewBox="0 0 11 18"><path d="M1 1 L9 9 L1 17" fill="none" stroke="#a6a6a6" stroke-width="1.8"/></svg>
<svg class="a" style="left:71px;top:345px" width="36" height="32" viewBox="0 0 36 32"><path d="M3.2 4.2 H13.5 L16.5 8.3 H30.9 V25.8 H3.2 Z" fill="#f9dc7a" stroke="#a28b42" stroke-width="2" stroke-linejoin="miter"/><path d="M3.2 9.3 H30.9" stroke="#a28b42" stroke-width="1.6"/><path d="M4.5 5.6 H12.8" stroke="#fde48e" stroke-width="1"/><rect x="17" y="14.2" width="14.2" height="14" fill="#f0c864" stroke="#6e5518" stroke-width="2"/><rect x="18" y="15.2" width="12.2" height="3" fill="#e6c880"/><path d="M24.1 14.5 V28 M17.5 21.6 H30.7" stroke="#b89440" stroke-width="1.2"/><rect x="25.6" y="18.6" width="3.4" height="1.8" fill="#fff"/></svg>
<div class="a t" style="left:121px;top:343.99px;line-height:34px;font-size:26px;color:#000;font-weight:normal;font-family:'Liberation Sans', sans-serif;">Test Resources</div>
<svg class="a" style="left:45px;top:390px" width="11" height="18" viewBox="0 0 11 18"><path d="M1 1 L9 9 L1 17" fill="none" stroke="#a6a6a6" stroke-width="1.8"/></svg>
<svg class="a" style="left:71px;top:383px" width="36" height="32" viewBox="0 0 36 32"><path d="M26 21.5 Q31 24.5, 27.5 28.5 H5 V21.5 Z" fill="#fff" stroke="#a8a8a8" stroke-width="1.6"/><rect x="5" y="21.5" width="21.5" height="7.2" fill="#919cbc" stroke="#555f7a" stroke-width="2"/><path d="M28.5 13.5 L32.5 12 Q35 16, 31 20.6 H28.5 Z" fill="#fff" stroke="#a8a8a8" stroke-width="1.6"/><rect x="7" y="13.5" width="21.5" height="7.2" fill="#a9a07e" stroke="#6e6850" stroke-width="2"/><path d="M25 5.5 L29.5 2 Q31.5 8, 27 12.5 H25 Z" fill="#fff" stroke="#a8a8a8" stroke-width="1.6"/><path d="M3 5.5 L6.5 2 H29.5 L25 5.5 Z" fill="#c6a3a6" stroke="#7e6264" stroke-width="1.6" stroke-linejoin="round"/><rect x="3" y="5.5" width="22" height="7" fill="#c6a3a6" stroke="#7e6264" stroke-width="2"/></svg>
<div class="a t" style="left:121px;top:381.99px;line-height:34px;font-size:26px;color:#000;font-weight:normal;font-family:'Liberation Sans', sans-serif;">Configurations</div>
<svg class="a" style="left:42px;top:433px" width="18" height="11" viewBox="0 0 18 11"><path d="M1 1 L9 9 L17 1" fill="none" stroke="#a6a6a6" stroke-width="1.8"/></svg>
<svg class="a" style="left:71px;top:421px" width="36" height="32" viewBox="0 0 36 32"><path d="M3.2 4.3 H13.5 L16.5 8.6 H26.7 V25.5 H3.2 Z" fill="#f9dc7a" stroke="#a28b42" stroke-width="2"/><path d="M8 12.4 H33.5 L28 25.5 H3.2 Z" fill="#f9dc7a" stroke="#a28b42" stroke-width="2" stroke-linejoin="round"/><path d="M20.5 28.5 L26 23" stroke="#8f8f8f" stroke-width="6" stroke-linecap="round"/><circle cx="28.6" cy="20.6" r="5.6" fill="#e4e4e4" stroke="#8f8f8f" stroke-width="1.8"/><path d="M20.5 28.5 L26 23" stroke="#e4e4e4" stroke-width="2.6" stroke-linecap="round"/><path d="M27.5 13.5 L35.5 21.5 L32.5 22.8 L27.2 18 Z" fill="#fff"/><path d="M28 15.2 Q26.5 18.5, 28.5 20 Q30.5 21.5, 34 20.8" fill="none" stroke="#8f8f8f" stroke-width="1.6"/></svg>
<div class="a t" style="left:119.8px;top:419.99px;line-height:34px;font-size:26px;color:#000;font-weight:normal;font-family:'Liberation Sans', sans-serif;letter-spacing:0.52px;">Build Scripts</div>
<svg class="a" style="left:107px;top:457px" width="36" height="32" viewBox="0 0 36 32"><path d="M10 3.2 H4.1 V30.6 H10 M26 3.2 H31.8 V30.6 H26" fill="none" stroke="#a8401e" stroke-width="3.8"/><path d="M11.8 8.8 H24.2 M17.9 9 V26.8" fill="none" stroke="#000" stroke-width="3.7" stroke-linecap="round"/></svg>
<div class="a t" style="left:157px;top:457.99px;line-height:34px;font-size:26px;color:#000;font-weight:normal;font-family:'Liberation Sans', sans-serif;letter-spacing:0.45px;">libs.versions.toml</div>
<svg class="a" style="left:81px;top:504px" width="11" height="18" viewBox="0 0 11 18"><path d="M1 1 L9 9 L1 17" fill="none" stroke="#a6a6a6" stroke-width="1.8"/></svg>
<svg class="a" style="left:107px;top:497px" width="36" height="32" viewBox="0 0 36 32"><path d="M8 2 H22 L29 9 V31 H8 Z" fill="#dde6f0" stroke="#6c7a88" stroke-width="2"/><circle cx="16" cy="24" r="5" fill="#3a6ac0"/></svg>
<div class="a t" style="left:157px;top:495.99px;line-height:34px;font-size:26px;color:#000;font-weight:normal;font-family:'Liberation Sans', sans-serif;">gradle.properties [root]</div>
</div>
<div class="a" style="left:70px;top:782px;width:516px;height:646px;background:#f2f2f2;border:2px solid #bebebe;box-sizing:border-box"></div>
<div class="a" style="left:72px;top:784px;width:162px;height:56px;background:#f2f2f2"></div>
<div class="a" style="left:234px;top:782px;width:352px;height:58px;background:#d3d3d3;border-left:2px solid #bebebe;border-bottom:2px solid #bebebe;box-sizing:border-box"></div>
<div class="a" style="left:72px;top:840px;width:512px;height:494px;background:#fff"></div>
<div class="a t" style="left:81.5px;top:793.99px;line-height:34px;font-size:26px;color:#000;font-weight:normal;font-family:'Liberation Sans', sans-serif;">Navigator</div>
<svg class="a" style="left:204px;top:805px" width="17" height="17" viewBox="0 0 17 17"><path d="M1.5 1.5 L15.5 15.5 M15.5 1.5 L1.5 15.5" stroke="#6b6b6b" stroke-width="2.1" fill="none"/></svg>
<div class="a" style="left:550px;top:816px;width:20px;height:2px;background:#6b6b6b"></div>
<svg class="a" style="left:108px;top:840px" width="36" height="34" viewBox="0 0 36 34"><rect x="3.2" y="15" width="15.8" height="15.8" fill="#a6cbe9" stroke="#6788a6" stroke-width="2"/><path d="M16.9 3.4 L26.6 13 L16.9 22.6 L7.2 13 Z" fill="#efbf6e" stroke="#a98a4d" stroke-width="1.8"/><circle cx="25.2" cy="22.9" r="8" fill="#fdaaa5" stroke="#b57a76" stroke-width="2"/></svg>
<div class="a t" style="left:158px;top:841.99px;line-height:34px;font-size:26px;color:#000;font-weight:normal;font-family:'Liberation Sans', sans-serif;">App</div>
<svg class="a" style="left:79px;top:892px" width="18" height="11" viewBox="0 0 18 11"><path d="M1 1 L9 9 L17 1" fill="none" stroke="#a6a6a6" stroke-width="1.8"/></svg>
<svg class="a" style="left:108px;top:878px" width="36" height="34" viewBox="0 0 36 34"><rect x="3.2" y="15" width="15.8" height="15.8" fill="#a6cbe9" stroke="#6788a6" stroke-width="2"/><path d="M16.9 3.4 L26.6 13 L16.9 22.6 L7.2 13 Z" fill="#efbf6e" stroke="#a98a4d" stroke-width="1.8"/><circle cx="25.2" cy="22.9" r="8" fill="#fdaaa5" stroke="#b57a76" stroke-width="2"/></svg>
<div class="a t" style="left:157px;top:879.99px;line-height:34px;font-size:26px;color:#000;font-weight:normal;font-family:'Liberation Sans', sans-serif;letter-spacing:-0.2px;">FractionCategory</div>
<div class="a" style="left:73px;top:920px;width:511px;height:80px;overflow:hidden">
<svg class="a" style="left:79px;top:0px" width="26" height="30" viewBox="0 0 26 30"><circle cx="14.8" cy="16.5" r="9.8" fill="#fdaaa5" stroke="#b57a76" stroke-width="1.8"/><rect x="13" y="5.3" width="3.8" height="23" fill="#fdaaa5" stroke="#b57a76" stroke-width="1.8"/></svg>
<div class="a t" style="left:121px;top:-2.01px;line-height:34px;font-size:26px;color:#000;font-weight:normal;font-family:'Liberation Sans', sans-serif;letter-spacing:-0.1px;white-space:nowrap">div(<span style="color:#8c8c8c">Integer self, Integer other</span>) : <span style="color:#8c8c8c">Fraction</span></div>
<svg class="a" style="left:79px;top:38px" width="26" height="30" viewBox="0 0 26 30"><circle cx="14.8" cy="16.5" r="9.8" fill="#fdaaa5" stroke="#b57a76" stroke-width="1.8"/><rect x="13" y="5.3" width="3.8" height="23" fill="#fdaaa5" stroke="#b57a76" stroke-width="1.8"/></svg>
<div class="a t" style="left:121px;top:35.99px;line-height:34px;font-size:26px;color:#000;font-weight:normal;font-family:'Liberation Sans', sans-serif;letter-spacing:-0.1px;white-space:nowrap">plus(<span style="color:#8c8c8c">Fraction self, Fraction other</span>) : <span style="color:#8c8c8c">Fraction</span></div>
</div>
<div class="a" style="left:73px;top:1334px;width:511px;height:20px;background:#f5f5f5"></div>
<div class="a" style="left:76px;top:1338px;width:412px;height:12px;background:#dadada;border-radius:6px"></div>
<div class="a" style="left:73px;top:1353px;width:511px;height:2px;background:#c6c6c6"></div>
<svg class="a" style="left:319px;top:1358px" width="18" height="9" viewBox="0 0 18 9"><path d="M0 0 L18 0 L9 9 Z" fill="#b0b0b0"/></svg>
<div class="a t" style="left:82px;top:1378.99px;line-height:34px;font-size:26px;color:#000;font-weight:normal;font-family:'Liberation Sans', sans-serif;">Filters:</div>
<svg class="a" style="left:182px;top:1378px" width="26" height="32" viewBox="0 0 26 32"><rect x="3" y="10" width="11" height="20" fill="#f4a8a0" stroke="#b06a5a" stroke-width="1.5"/><ellipse cx="8.5" cy="6" rx="3.5" ry="5" fill="#f4c890" stroke="#a88040" stroke-width="1.5"/><rect x="14" y="16" width="10" height="14" fill="#f4a8a0" stroke="#b06a5a" stroke-width="1.5"/><circle cx="19" cy="13" r="3" fill="#f4c890" stroke="#a88040" stroke-width="1.5"/><rect x="3" y="20" width="11" height="10" fill="#8ab8e0" stroke="#4a78a8" stroke-width="1.5"/><rect x="14" y="22" width="10" height="8" fill="#8ab8e0" stroke="#4a78a8" stroke-width="1.5"/></svg>
<div class="a" style="left:232px;top:1378px;width:44px;height:35px;background:#cfcfcf;border-radius:7px"></div>
<div class="a" style="left:290px;top:1378px;width:44px;height:35px;background:#cfcfcf;border-radius:7px"></div>
<div class="a" style="left:348px;top:1378px;width:44px;height:35px;background:#cfcfcf;border-radius:7px"></div>
<svg class="a" style="left:244px;top:1386px" width="20" height="20" viewBox="0 0 20 20"><rect x="2" y="2" width="15" height="15" fill="#a9cdec" stroke="#5e86ad" stroke-width="2"/></svg>
<svg class="a" style="left:305px;top:1383px" width="14" height="26" viewBox="0 0 14 26"><rect x="3" y="1.5" width="7" height="22" fill="#a9cdec" stroke="#5e86ad" stroke-width="2"/></svg>
<svg class="a" style="left:357px;top:1382px" width="26" height="28" viewBox="0 0 26 28"><path d="M8 13 V9 Q8 3, 13 3 Q18 3, 18 9 V13" fill="none" stroke="#606060" stroke-width="2.5"/><rect x="4" y="12" width="18" height="14" rx="3" fill="#f09a78" stroke="#a85a3a" stroke-width="1.8"/><path d="M10 17 H16 M13 17 V23" stroke="#4a2a1a" stroke-width="2"/></svg>
<div class="a" style="left:594px;top:206px;width:1020px;height:689px;background:#f2f2f2"></div>
<div class="a" style="left:826px;top:206px;width:787px;height:57px;background:#bfc8d3"></div>
<div class="a" style="left:594px;top:206px;width:234px;height:6px;background:#3d80c8"></div>
<div class="a" style="left:594px;top:212px;width:2px;height:683px;background:#bdbdbd"></div>
<div class="a" style="left:1612px;top:263px;width:2px;height:632px;background:#bdbdbd"></div>
<div class="a" style="left:828px;top:262px;width:785px;height:2px;background:#bdbdbd"></div>
<div class="a" style="left:1133px;top:214px;width:1px;height:40px;background:#aeb6c0"></div>
<svg class="a" style="left:606px;top:217px" width="36" height="32" viewBox="0 0 36 32"><defs><linearGradient id="gvg" x1="0" y1="0" x2="0" y2="1"><stop offset="0" stop-color="#d0deec"/><stop offset="1" stop-color="#f4f8fc"/></linearGradient></defs><path d="M5 2.1 H23.7 L29 7.5 V29.6 H5 Z" fill="url(#gvg)" stroke="#6a7888" stroke-width="2.2" stroke-linejoin="round"/><path d="M21.1 2.1 V9.8 H29 Z" fill="#f4f8fc" stroke="#7a8898" stroke-width="1.8" stroke-linejoin="round"/><path d="M17.0 11.4 L19.5 15.7 L24.4 16.8 L21.1 20.5 L21.6 25.5 L17.0 23.5 L12.4 25.5 L12.9 20.5 L9.6 16.8 L14.5 15.7 Z" fill="#b4e4f4" stroke="#456f7c" stroke-width="2.8" stroke-linejoin="round"/></svg>
<div class="a t" style="left:648px;top:218.99px;line-height:34px;font-size:26px;color:#000;font-weight:normal;font-family:'Liberation Sans', sans-serif;">App.groovy</div>
<svg class="a" style="left:795px;top:230px" width="17" height="17" viewBox="0 0 17 17"><path d="M1.5 1.5 L15.5 15.5 M15.5 1.5 L1.5 15.5" stroke="#6b6b6b" stroke-width="2.1" fill="none"/></svg>
<svg class="a" style="left:840px;top:217px" width="36" height="32" viewBox="0 0 36 32"><path d="M10 3.2 H4.1 V30.6 H10 M26 3.2 H31.8 V30.6 H26" fill="none" stroke="#a8401e" stroke-width="3.8"/><path d="M11.8 8.8 H24.2 M17.9 9 V26.8" fill="none" stroke="#000" stroke-width="3.7" stroke-linecap="round"/></svg>
<div class="a t" style="left:882.5px;top:218.99px;line-height:34px;font-size:26px;color:#3b3b3b;font-weight:normal;font-family:'Liberation Sans', sans-serif;letter-spacing:0.35px;">libs.versions.toml</div>
<svg class="a" style="left:1101px;top:230px" width="17" height="17" viewBox="0 0 17 17"><path d="M1.5 1.5 L15.5 15.5 M15.5 1.5 L1.5 15.5" stroke="#6b6b6b" stroke-width="2.1" fill="none"/></svg>
<svg class="a" style="left:1146px;top:218px" width="36" height="30" viewBox="0 0 36 30"><path d="M2.4 26.6 V18.5 Q2.6 13.5, 6.2 11.2 L8.2 9 Q13 6.4, 19 6.6 Q24 7, 27.5 10.8 L32.8 10 Q33.5 14, 29.5 17.5 Q26.8 19.5, 26 22 L25.2 26.6 H22.3 Q20.8 22.8, 18.6 23 Q16.5 23.2, 15.3 26.6 H12.2 Q10.6 22.8, 8.8 23 Q6.8 23.2, 5.4 26.6 Z" fill="#0b3b4a"/><path d="M27.5 12.5 Q32.5 10.5, 31.8 6.5 Q31.2 3.6, 27.8 4.4" fill="none" stroke="#0b3b4a" stroke-width="3.6" stroke-linecap="round"/><path d="M8.6 15.2 Q10.8 18.6, 13.4 15.8" fill="none" stroke="#7f9aa2" stroke-width="1.3"/><circle cx="22.8" cy="14" r="1" fill="#7f9aa2"/></svg>
<div class="a t" style="left:1188px;top:218.99px;line-height:34px;font-size:26px;color:#3b3b3b;font-weight:normal;font-family:'Liberation Sans', sans-serif;letter-spacing:0.48px;">fractions:app</div>
<svg class="a" style="left:1354px;top:230px" width="17" height="17" viewBox="0 0 17 17"><path d="M1.5 1.5 L15.5 15.5 M15.5 1.5 L1.5 15.5" stroke="#6b6b6b" stroke-width="2.1" fill="none"/></svg>
<svg class="a" style="left:1476px;top:226px" width="16" height="20" viewBox="0 0 16 20"><path d="M13 2 L4 10 L13 18" fill="none" stroke="#b0b0b0" stroke-width="2"/></svg>
<svg class="a" style="left:1507px;top:226px" width="16" height="20" viewBox="0 0 16 20"><path d="M3 2 L12 10 L3 18" fill="none" stroke="#b0b0b0" stroke-width="2"/></svg>
<svg class="a" style="left:1542px;top:227px" width="22" height="14" viewBox="0 0 22 14"><path d="M2 2 L11 11 L20 2" fill="none" stroke="#555" stroke-width="2.2"/></svg>
<svg class="a" style="left:1578px;top:222px" width="24" height="24" viewBox="0 0 24 24"><rect x="2" y="2" width="20" height="20" fill="none" stroke="#555" stroke-width="2.2"/></svg>
<div class="a" style="left:600px;top:268px;width:114px;height:42px;background:#cccccc;border-radius:8px"></div>
<div class="a t" style="left:616px;top:271.99px;line-height:34px;font-size:26px;color:#000;font-weight:normal;font-family:'Liberation Sans', sans-serif;">Source</div>
<div class="a t" style="left:739px;top:271.99px;line-height:34px;font-size:26px;color:#000;font-weight:normal;font-family:'Liberation Sans', sans-serif;">History</div>
<div class="a" style="left:849px;top:272px;width:2px;height:34px;background:#c4c4c4"></div>
<div class="a" style="left:1039px;top:272px;width:2px;height:34px;background:#c4c4c4"></div>
<div class="a" style="left:1273px;top:272px;width:2px;height:34px;background:#c4c4c4"></div>
<div class="a" style="left:1419px;top:272px;width:2px;height:34px;background:#c4c4c4"></div>
<div class="a" style="left:1521px;top:272px;width:2px;height:34px;background:#c4c4c4"></div>
<svg class="a" style="left:860px;top:272px" width="36" height="36" viewBox="0 0 36 36"><rect x="3" y="3" width="28" height="27" fill="#eef5fb" stroke="#5a7ea4" stroke-width="2"/><path d="M7 6 H13 M10 6 V28 M7 28 H13" stroke="#333" stroke-width="1.6"/><path d="M13 19 L21 11 V15 H26 V6 H33 V22 H21 V27 Z" fill="#f4c47a" stroke="#a8742e" stroke-width="2" stroke-linejoin="round"/></svg>
<svg class="a" style="left:906px;top:272px" width="36" height="36" viewBox="0 0 36 36"><rect x="3" y="3" width="28" height="27" fill="#eef5fb" stroke="#5a7ea4" stroke-width="2"/><path d="M9 9 H24 M9 13 H16 M9 17 H14" stroke="#999" stroke-width="1.5"/><path d="M14 26 L22 18 V22 H34 V30 H22 V34 Z" fill="#f4c47a" stroke="#a8742e" stroke-width="2" stroke-linejoin="round"/></svg>
<svg class="a" style="left:970px;top:272px" width="36" height="36" viewBox="0 0 36 36"><rect x="5" y="3" width="28" height="27" fill="#c6c8cb" stroke="#a4a6a8" stroke-width="2"/><path d="M15 9 H28 M21 13 H28 M23 17 H28" stroke="#9a9a9a" stroke-width="1.5"/><path d="M23 26 L15 18 V22 H2 V30 H15 V34 Z" fill="#d0c0a8" stroke="#b8a890" stroke-width="1.5" stroke-linejoin="round"/></svg>
<svg class="a" style="left:1050px;top:272px" width="36" height="36" viewBox="0 0 36 36"><rect x="3" y="3" width="24" height="13" fill="#f4c47a" stroke="#a8742e" stroke-width="2"/><circle cx="19" cy="19" r="9.5" fill="#d4e4f8" stroke="#3a72c8" stroke-width="2.4"/><path d="M26 26 L32 32" stroke="#a8742e" stroke-width="4.5" stroke-linecap="round"/><path d="M26 26 L32 32" stroke="#f0b040" stroke-width="2" stroke-linecap="round"/></svg>
<svg class="a" style="left:1094px;top:272px" width="36" height="36" viewBox="0 0 36 36"><rect x="3" y="3" width="24" height="13" fill="#f4c47a" stroke="#a8742e" stroke-width="2"/><path d="M7 22.5 L17 12 V18 H32 V27 H17 V33 Z" fill="#cfe0f6" stroke="#3a72c8" stroke-width="2" stroke-linejoin="round"/></svg>
<svg class="a" style="left:1138px;top:272px" width="36" height="36" viewBox="0 0 36 36"><rect x="10" y="3" width="24" height="13" fill="#f4c47a" stroke="#a8742e" stroke-width="2"/><path d="M27 22.5 L17 12 V18 H2 V27 H17 V33 Z" fill="#cfe0f6" stroke="#3a72c8" stroke-width="2" stroke-linejoin="round"/></svg>
<svg class="a" style="left:1182px;top:272px" width="36" height="36" viewBox="0 0 36 36"><rect x="3" y="3" width="24" height="13" fill="#f4c47a" stroke="#a8742e" stroke-width="2"/><rect x="10" y="19" width="23" height="13" fill="#e4e4e4" stroke="#9a9a9a" stroke-width="2"/><path d="M28 5 L33 15 M3 18 L9 30" stroke="#333" stroke-width="1.8" stroke-dasharray="2 2"/></svg>
<svg class="a" style="left:1226px;top:272px" width="36" height="36" viewBox="0 0 36 36"><rect x="3" y="3" width="24" height="20" fill="none" stroke="#333" stroke-width="1.8" stroke-dasharray="2.5 2.5"/><path d="M21 20 L32 28 L27 29 L24 34 Z" fill="#fff" stroke="#555" stroke-width="1.6" stroke-linejoin="round"/></svg>
<svg class="a" style="left:1284px;top:272px" width="36" height="36" viewBox="0 0 36 36"><path d="M15.3 3.1 H27.6 L32.4 8.8 L27.6 14.6 H15.3 Z" fill="#a0dcea" stroke="#5a8c98" stroke-width="2" stroke-linejoin="miter"/><path d="M12.7 7.2 L22.7 17.4 V18.6 H16.6 V30.9 H9.2 V18.6 H3.1 V17.4 Z" fill="#f4c47a" stroke="#a8804a" stroke-width="2" stroke-linejoin="miter"/></svg>
<svg class="a" style="left:1328px;top:272px" width="36" height="36" viewBox="0 0 36 36"><path d="M15.3 19.4 H27.6 L32.4 25 L27.6 30.5 H15.3 Z" fill="#a0dcea" stroke="#5a8c98" stroke-width="2"/><path d="M9.2 3.1 H16.6 V15.3 H22.7 V16.4 L12.7 26.4 L3.1 16.4 V15.3 H9.2 Z" fill="#f4c47a" stroke="#a8804a" stroke-width="2"/></svg>
<svg class="a" style="left:1372px;top:272px" width="36" height="36" viewBox="0 0 36 36"><path d="M3.1 3.1 H15.4 L20.2 8.8 L15.4 14.6 H3.1 Z" fill="#a0dcea" stroke="#5a8c98" stroke-width="2"/><path d="M15.4 19.4 H27.7 L32.5 25 L27.7 30.5 H15.4 Z" fill="#e8e8e8" stroke="#9a9a9a" stroke-width="2"/><circle cx="22.9" cy="14.7" r="1" fill="#222"/><circle cx="7" cy="18.8" r="1" fill="#222"/><circle cx="9.1" cy="22.9" r="1" fill="#222"/><circle cx="11.1" cy="27" r="1" fill="#222"/></svg>
<svg class="a" style="left:1430px;top:272px" width="36" height="36" viewBox="0 0 36 36"><path d="M2.7 12.6 L12.7 4.3 V8.2 H23.2 V17.2 H12.7 V21 Z" fill="#cfe0f6" stroke="#3a72c8" stroke-width="2" stroke-linejoin="round"/><path d="M26.5 6.5 H33.7 M26.5 10.5 H33.7 M26.5 14.6 H33.7 M26.5 18.7 H33.7 M26.5 22.6 H33.7 M6 27 H33.7 M6 30.8 H33.7" stroke="#5c5c5c" stroke-width="1.8"/></svg>
<svg class="a" style="left:1474px;top:272px" width="36" height="36" viewBox="0 0 36 36"><path d="M2.9 8.2 H12.4 V4.3 L22.9 12.6 L12.4 21 V17.2 H2.9 Z" fill="#cfe0f6" stroke="#3a72c8" stroke-width="2" stroke-linejoin="round"/><path d="M26.2 6.5 H34 M26.2 10.5 H34 M26.2 14.6 H34 M26.2 18.7 H34 M26.2 22.6 H34 M6.3 27 H34 M6.3 30.8 H34" stroke="#5c5c5c" stroke-width="1.8"/></svg>
<svg class="a" style="left:949px;top:286px" width="12" height="8" viewBox="0 0 12 8"><path d="M0 0 L12 0 L6 8 Z" fill="#333"/></svg>
<svg class="a" style="left:1015px;top:286px" width="12" height="8" viewBox="0 0 12 8"><path d="M0 0 L12 0 L6 8 Z" fill="#c4c4c4"/></svg>
<svg class="a" style="left:1536px;top:280px" width="14" height="16" viewBox="0 0 14 16"><path d="M1.5 1.5 L7 6.5 L12.5 1.5 M1.5 8.5 L7 13.5 L12.5 8.5" fill="none" stroke="#333" stroke-width="2.2"/></svg>
<svg class="a" style="left:1580px;top:276px" width="24" height="24" viewBox="0 0 24 24"><rect x="3" y="3" width="18.5" height="18.5" fill="none" stroke="#7a7a7a" stroke-width="2"/><path d="M12.2 5 V19.5 M5 12.2 H19.5" stroke="#b4b4b4" stroke-width="1.6" stroke-dasharray="2 1"/></svg>
<div class="a" style="left:596px;top:314px;width:1016px;height:2px;background:#bdbdbd"></div>
<div class="a" style="left:596px;top:316px;width:54px;height:538px;background:#e9e8e3"></div>
<div class="a" style="left:650px;top:316px;width:2px;height:518px;background:#c9c9c5"></div>
<div class="a" style="left:652px;top:316px;width:914px;height:518px;background:#fff"></div>
<div class="a" style="left:652px;top:834px;width:914px;height:20px;background:#f4f4f4"></div>
<div class="a" style="left:596px;top:834px;width:114px;height:20px;background:#e9e8e3"></div>
<div class="a" style="left:711px;top:792px;width:855px;height:34px;background:#f7f1e0"></div>
<div class="a" style="left:714px;top:838px;width:777px;height:12px;background:#dadada;border-radius:6px"></div>
<div class="a" style="left:1566px;top:316px;width:20px;height:538px;background:#f5f5f5"></div>
<div class="a" style="left:1570px;top:320px;width:12px;height:382px;background:#dadada;border-radius:6px"></div>
<div class="a" style="left:1586px;top:316px;width:26px;height:538px;background:#f0f0f0"></div>
<div class="a" style="left:1589px;top:329px;width:18px;height:18px;background:#fff"></div>
<div class="a" style="left:1589px;top:329px;width:16px;height:16px;background:#cfcab8"></div>
<div class="a" style="left:1592px;top:332px;width:13px;height:13px;background:#62b36a"></div>
<svg class="a" style="left:1588px;top:680px" width="22" height="9" viewBox="0 0 22 9"><path d="M0 4.5 H22" stroke="#555" stroke-width="2"/><rect x="9" y="2" width="5" height="6" fill="#555"/></svg>
<div class="a" style="left:596px;top:854px;width:1016px;height:1px;background:#c0c0c0"></div>
<svg class="a" style="left:612px;top:858px" width="22" height="34" viewBox="0 0 22 34"><path d="M2 2 L17 17 L2 32" fill="none" stroke="#9a9a9a" stroke-width="5"/><path d="M2 2 L17 17 L2 32" fill="none" stroke="#f2f2f2" stroke-width="2"/></svg>
<svg class="a" style="left:1583px;top:866px" width="18" height="18" viewBox="0 0 18 18"><path d="M1.5 1.5 L16.5 16.5 M16.5 1.5 L1.5 16.5" stroke="#555" stroke-width="2.4" fill="none"/></svg>
<div class="a" style="left:594px;top:894px;width:1020px;height:2px;background:#bebebe"></div>
<div class="a t" style="left:560px;width:84px;text-align:right;top:317.90px;line-height:34px;font-size:26.67px;font-family:'Liberation Mono', monospace;color:#333">1</div>
<div class="a t" style="left:560px;width:84px;text-align:right;top:351.90px;line-height:34px;font-size:26.67px;font-family:'Liberation Mono', monospace;color:#333">2</div>
<div class="a t" style="left:560px;width:84px;text-align:right;top:385.90px;line-height:34px;font-size:26.67px;font-family:'Liberation Mono', monospace;color:#333">3</div>
<div class="a t" style="left:560px;width:84px;text-align:right;top:419.90px;line-height:34px;font-size:26.67px;font-family:'Liberation Mono', monospace;color:#333">4</div>
<div class="a t" style="left:560px;width:84px;text-align:right;top:453.90px;line-height:34px;font-size:26.67px;font-family:'Liberation Mono', monospace;color:#333">5</div>
<div class="a t" style="left:560px;width:84px;text-align:right;top:487.90px;line-height:34px;font-size:26.67px;font-family:'Liberation Mono', monospace;color:#333">6</div>
<div class="a t" style="left:560px;width:84px;text-align:right;top:521.90px;line-height:34px;font-size:26.67px;font-family:'Liberation Mono', monospace;color:#333">7</div>
<div class="a t" style="left:560px;width:84px;text-align:right;top:555.90px;line-height:34px;font-size:26.67px;font-family:'Liberation Mono', monospace;color:#333">8</div>
<div class="a t" style="left:560px;width:84px;text-align:right;top:589.90px;line-height:34px;font-size:26.67px;font-family:'Liberation Mono', monospace;color:#333">9</div>
<div class="a t" style="left:560px;width:84px;text-align:right;top:623.90px;line-height:34px;font-size:26.67px;font-family:'Liberation Mono', monospace;color:#333">10</div>
<div class="a t" style="left:560px;width:84px;text-align:right;top:657.90px;line-height:34px;font-size:26.67px;font-family:'Liberation Mono', monospace;color:#333">11</div>
<div class="a t" style="left:560px;width:84px;text-align:right;top:691.90px;line-height:34px;font-size:26.67px;font-family:'Liberation Mono', monospace;color:#333">12</div>
<div class="a t" style="left:560px;width:84px;text-align:right;top:725.90px;line-height:34px;font-size:26.67px;font-family:'Liberation Mono', monospace;color:#333">13</div>
<div class="a t" style="left:560px;width:84px;text-align:right;top:759.90px;line-height:34px;font-size:26.67px;font-family:'Liberation Mono', monospace;color:#333">14</div>
<div class="a t" style="left:560px;width:84px;text-align:right;top:793.90px;line-height:34px;font-size:26.67px;font-family:'Liberation Mono', monospace;color:#333">15</div>
<div class="a" style="left:652px;top:316px;width:914px;height:518px;overflow:hidden">
<div class="a t" style="left:59px;top:1.90px;line-height:34px;font-size:26.67px;font-family:'Liberation Mono', monospace;color:#000;white-space:pre"><span style="color:#3166d5">import</span> org.apache.commons.numbers.fraction.Fraction</div>
<div class="a t" style="left:59px;top:35.90px;line-height:34px;font-size:26.67px;font-family:'Liberation Mono', monospace;color:#000;white-space:pre"></div>
<div class="a t" style="left:59px;top:69.90px;line-height:34px;font-size:26.67px;font-family:'Liberation Mono', monospace;color:#000;white-space:pre"><span style="color:#3166d5">class</span> <b>FractionCategory</b> {</div>
<div class="a t" style="left:59px;top:103.90px;line-height:34px;font-size:26.67px;font-family:'Liberation Mono', monospace;color:#000;white-space:pre">    <span style="color:#3166d5">static</span> Fraction <b><i>div</i></b>(Integer self, Integer other) {</div>
<div class="a t" style="left:59px;top:137.90px;line-height:34px;font-size:26.67px;font-family:'Liberation Mono', monospace;color:#000;white-space:pre">        Fraction.of(self, other)</div>
<div class="a t" style="left:59px;top:171.90px;line-height:34px;font-size:26.67px;font-family:'Liberation Mono', monospace;color:#000;white-space:pre">    }</div>
<div class="a t" style="left:59px;top:205.90px;line-height:34px;font-size:26.67px;font-family:'Liberation Mono', monospace;color:#000;white-space:pre">    <span style="color:#3166d5">static</span> Fraction <b><i>plus</i></b>(Fraction self, Fraction other) {</div>
<div class="a t" style="left:59px;top:239.90px;line-height:34px;font-size:26.67px;font-family:'Liberation Mono', monospace;color:#000;white-space:pre">        self.add(other)</div>
<div class="a t" style="left:59px;top:273.90px;line-height:34px;font-size:26.67px;font-family:'Liberation Mono', monospace;color:#000;white-space:pre">    }</div>
<div class="a t" style="left:59px;top:307.90px;line-height:34px;font-size:26.67px;font-family:'Liberation Mono', monospace;color:#000;white-space:pre">}</div>
<div class="a t" style="left:59px;top:341.90px;line-height:34px;font-size:26.67px;font-family:'Liberation Mono', monospace;color:#000;white-space:pre"></div>
<div class="a t" style="left:59px;top:375.90px;line-height:34px;font-size:26.67px;font-family:'Liberation Mono', monospace;color:#000;white-space:pre">use(FractionCategory) {</div>
<div class="a t" style="left:59px;top:409.90px;line-height:34px;font-size:26.67px;font-family:'Liberation Mono', monospace;color:#000;white-space:pre">    println 1 / 3 + 1 / 2</div>
<div class="a t" style="left:59px;top:443.90px;line-height:34px;font-size:26.67px;font-family:'Liberation Mono', monospace;color:#000;white-space:pre">}</div>
<div class="a t" style="left:59px;top:477.90px;line-height:34px;font-size:26.67px;font-family:'Liberation Mono', monospace;color:#000;white-space:pre"></div>
<div class="a" style="left:57px;top:102px;width:0;height:202px;border-left:2px dotted #cccccc"></div>
<div class="a" style="left:121px;top:136px;width:0;height:68px;border-left:2px dotted #cccccc"></div>
<div class="a" style="left:121px;top:238px;width:0;height:34px;border-left:2px dotted #cccccc"></div>
<div class="a" style="left:57px;top:408px;width:0;height:34px;border-left:2px dotted #cccccc"></div>
</div>
<div class="a" style="left:594px;top:904px;width:1020px;height:524px;background:#f2f2f2;border:2px solid #bebebe;box-sizing:border-box"></div>
<div class="a" style="left:596px;top:906px;width:132px;height:56px;background:#f2f2f2"></div>
<div class="a" style="left:728px;top:904px;width:886px;height:58px;background:#d3d3d3;border-left:2px solid #bebebe;border-bottom:2px solid #bebebe;box-sizing:border-box"></div>
<div class="a t" style="left:606px;top:915.99px;line-height:34px;font-size:26px;color:#000;font-weight:normal;font-family:'Liberation Sans', sans-serif;">Output</div>
<svg class="a" style="left:698px;top:927px" width="17" height="17" viewBox="0 0 17 17"><path d="M1.5 1.5 L15.5 15.5 M15.5 1.5 L1.5 15.5" stroke="#6b6b6b" stroke-width="2.1" fill="none"/></svg>
<div class="a" style="left:1578px;top:938px;width:20px;height:2px;background:#6b6b6b"></div>
<svg class="a" style="left:604px;top:966px" width="34" height="38" viewBox="0 0 34 38"><defs><linearGradient id="rrg" x1="0" y1="0" x2="0" y2="1"><stop offset="0" stop-color="#c8ecaa"/><stop offset="1" stop-color="#a0dc7e"/></linearGradient></defs><path d="M3 4 L17 19 L3 34 Z" fill="url(#rrg)" stroke="#1c8a12" stroke-width="2.2" stroke-linejoin="round"/><path d="M15 4 L30 19 L15 34 Z" fill="url(#rrg)" stroke="#1c8a12" stroke-width="2.2" stroke-linejoin="round"/></svg>
<svg class="a" style="left:604px;top:1014px" width="34" height="38" viewBox="0 0 34 38"><path d="M3 4 L17 19 L3 34 Z" fill="#dcdc8a" stroke="#a4a466" stroke-width="2.2" stroke-linejoin="round"/><path d="M15 4 L30 19 L15 34 Z" fill="#dcdc8a" stroke="#a4a466" stroke-width="2.2" stroke-linejoin="round"/></svg>
<svg class="a" style="left:607px;top:1067px" width="30" height="30" viewBox="0 0 30 30"><rect x="1.8" y="1.8" width="26.4" height="26.4" fill="#c9aeae" stroke="#b09898" stroke-width="1.6"/><rect x="10" y="10" width="11" height="11" fill="#c8c8c8" stroke="#b89ca0" stroke-width="2"/></svg>
<svg class="a" style="left:604px;top:1114px" width="36" height="34" viewBox="0 0 36 34"><circle cx="8" cy="6" r="4.6" fill="#f8e8c0" stroke="#b07a10" stroke-width="2.2"/><circle cx="8" cy="6" r="1.6" fill="#9a6a08"/><g fill="none" stroke-linecap="round"><path d="M31.35 7.84 A4.5 4.5 0 1 1 28.16 4.65 M3.15 23.66 A4.5 4.5 0 1 1 6.34 26.85 M10.5 20.5 L23.5 11" stroke="#4a5662" stroke-width="6"/><path d="M31.35 7.84 A4.5 4.5 0 1 1 28.16 4.65 M3.15 23.66 A4.5 4.5 0 1 1 6.34 26.85 M10.5 20.5 L23.5 11" stroke="#f4f6f8" stroke-width="2.6"/></g><rect x="21" y="21" width="8" height="7" rx="2" fill="#dfe6ee" stroke="#4a5662" stroke-width="1.8"/><rect x="28" y="19.5" width="5" height="10" rx="2" fill="#dfe6ee" stroke="#4a5662" stroke-width="1.8"/></svg>
<div class="a" style="left:648px;top:1030px;width:964px;height:2px;background:#c0c0c0"></div>
<div class="a" style="left:890px;top:970px;width:308px;height:62px;background:#f2f2f2"></div>
<div class="a" style="left:890px;top:970px;width:308px;height:6px;background:#c2c2c2"></div>
<div class="a" style="left:890px;top:970px;width:2px;height:62px;background:#c2c2c2"></div>
<div class="a" style="left:1196px;top:970px;width:2px;height:62px;background:#c2c2c2"></div>
<div class="a t" style="left:672px;top:981.99px;line-height:34px;font-size:26px;color:#000;font-weight:normal;font-family:'Liberation Sans', sans-serif;">fractions (init)</div>
<svg class="a" style="left:842px;top:991px" width="17" height="17" viewBox="0 0 17 17"><path d="M1.5 1.5 L15.5 15.5 M15.5 1.5 L1.5 15.5" stroke="#6b6b6b" stroke-width="2.1" fill="none"/></svg>
<div class="a t" style="left:915px;top:981.99px;line-height:34px;font-size:26px;color:#000;font-weight:normal;font-family:'Liberation Sans', sans-serif;">Run (fractions:app)</div>
<svg class="a" style="left:1150px;top:991px" width="17" height="17" viewBox="0 0 17 17"><path d="M1.5 1.5 L15.5 15.5 M15.5 1.5 L1.5 15.5" stroke="#6b6b6b" stroke-width="2.1" fill="none"/></svg>
<div class="a" style="left:648px;top:1032px;width:944px;height:374px;background:#fff"></div>
<div class="a" style="left:648px;top:1406px;width:964px;height:20px;background:#f4f4f4"></div>
<div class="a" style="left:682px;top:1410px;width:542px;height:12px;background:#dadada;border-radius:6px"></div>
<div class="a" style="left:1592px;top:1032px;width:20px;height:374px;background:#f4f4f4"></div>
<div class="a" style="left:1596px;top:1124px;width:12px;height:278px;background:#dadada;border-radius:6px"></div>
<div class="a" style="left:648px;top:1032px;width:942px;height:374px;overflow:hidden">
<div class="a t" style="left:42px;top:-2.10px;line-height:34px;font-size:26.67px;font-family:'Liberation Mono', monospace;color:#000;white-space:pre">&gt; Task :app:compileJava <span style="color:#f39a00">NO–SOURCE</span></div>
<div class="a t" style="left:42px;top:31.90px;line-height:34px;font-size:26.67px;font-family:'Liberation Mono', monospace;color:#000;white-space:pre">&gt; Task :app:compileGroovy</div>
<div class="a t" style="left:42px;top:65.90px;line-height:34px;font-size:26.67px;font-family:'Liberation Mono', monospace;color:#000;white-space:pre">&gt; Task :app:processResources <span style="color:#f39a00">NO–SOURCE</span></div>
<div class="a t" style="left:42px;top:99.90px;line-height:34px;font-size:26.67px;font-family:'Liberation Mono', monospace;color:#000;white-space:pre">&gt; Task :app:classes</div>
<div class="a t" style="left:42px;top:133.90px;line-height:34px;font-size:26.67px;font-family:'Liberation Mono', monospace;color:#000;white-space:pre"></div>
<div class="a t" style="left:42px;top:167.90px;line-height:34px;font-size:26.67px;font-family:'Liberation Mono', monospace;color:#000;white-space:pre">&gt; Task :app:run</div>
<div class="a t" style="left:42px;top:201.90px;line-height:34px;font-size:26.67px;font-family:'Liberation Mono', monospace;color:#000;white-space:pre">5 / 6</div>
<div class="a t" style="left:42px;top:235.90px;line-height:34px;font-size:26.67px;font-family:'Liberation Mono', monospace;color:#000;white-space:pre"></div>
<div class="a t" style="left:42px;top:269.90px;line-height:34px;font-size:26.67px;font-family:'Liberation Mono', monospace;color:#000;white-space:pre"><span style="color:#1a8a1a">BUILD SUCCESSFUL in 891ms</span></div>
<div class="a t" style="left:42px;top:303.90px;line-height:34px;font-size:26.67px;font-family:'Liberation Mono', monospace;color:#000;white-space:pre">2 actionable tasks: 2 executed</div>
</div>
<div class="a" style="left:1081px;top:1436px;width:2px;height:34px;background:#cdcdcd"></div>
<div class="a" style="left:1335px;top:1436px;width:2px;height:34px;background:#cdcdcd"></div>
<div class="a" style="left:1395px;top:1436px;width:2px;height:34px;background:#cdcdcd"></div>
<div class="a t" style="left:1185px;top:1436.34px;line-height:32px;font-size:25px;color:#000;font-weight:normal;font-family:'Liberation Sans', sans-serif;">15:1</div>
<div class="a t" style="left:1344px;top:1436.34px;line-height:32px;font-size:25px;color:#000;font-weight:normal;font-family:'Liberation Sans', sans-serif;">INS</div>
<div class="a t" style="left:1398px;top:1436.34px;line-height:32px;font-size:25px;color:#000;font-weight:normal;font-family:'Liberation Sans', sans-serif;">Unix (LF)</div>
<div class="a" style="left:62px;top:62px;width:1560px;height:1416px;border-radius:20px;box-shadow:inset 0 0 0 1px rgba(255,255,255,0.55);pointer-events:none"></div>
</div>
</body></html>
